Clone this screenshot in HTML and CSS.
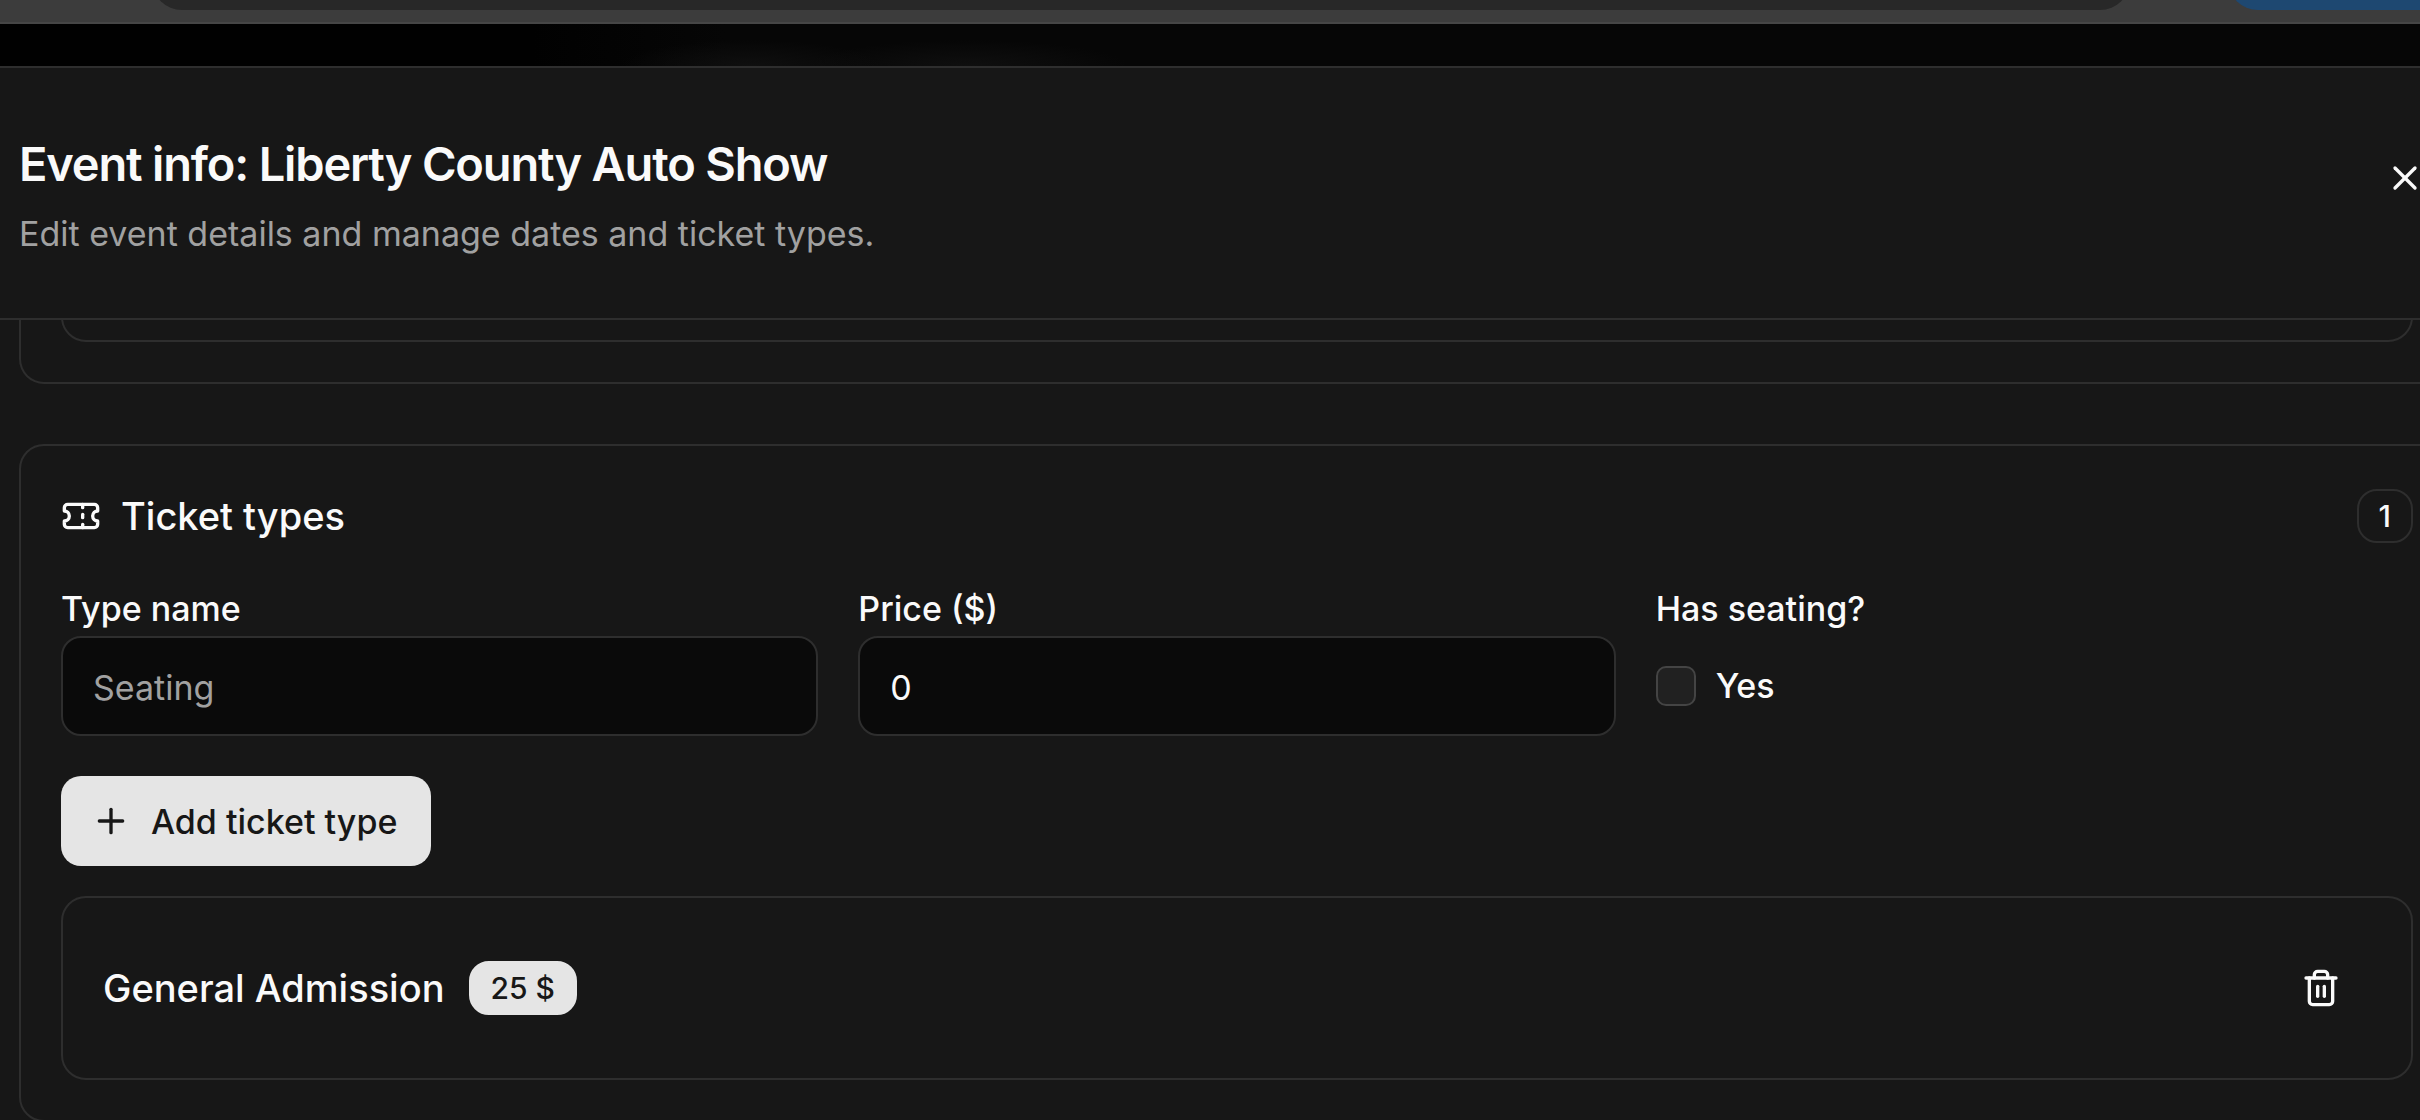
FILE: index.html
```html
<!DOCTYPE html>
<html lang="en">
<head>
<meta charset="utf-8">
<meta name="viewport" content="width=device-width, initial-scale=1">
<title>Event info: Liberty County Auto Show</title>
<link rel="stylesheet" href="styles.css">
</head>
<body>
<div class="toolbar">
  <div class="toolbar-address"></div>
  <div class="toolbar-action"></div>
</div>
<div class="backdrop"></div>
<main class="dialog">
  <header class="dialog-header">
    <div class="dialog-heading">
      <h1 class="dialog-title">Event info: Liberty County Auto Show</h1>
      <p class="dialog-description">Edit event details and manage dates and ticket types.</p>
    </div>
    <button class="icon-button" type="button" aria-label="Close">
      <svg class="icon" viewBox="0 0 24 24"><path d="M18 6 6 18"/><path d="m6 6 12 12"/></svg>
    </button>
  </header>
  <div class="dialog-body">
    <section class="card card-scrolled">
      <div class="scrolled-item"></div>
    </section>
    <section class="card">
      <div class="card-header">
        <h2 class="card-title">
          <svg class="icon" viewBox="0 0 24 24"><path d="M2 9a3 3 0 0 1 0 6v2a2 2 0 0 0 2 2h16a2 2 0 0 0 2-2v-2a3 3 0 0 1 0-6V7a2 2 0 0 0-2-2H4a2 2 0 0 0-2 2Z"/><path d="M13 5v2"/><path d="M13 17v2"/><path d="M13 11v2"/></svg>
          <span>Ticket types</span>
        </h2>
        <span class="badge badge-outline">1</span>
      </div>
      <form class="ticket-form">
        <div class="fields">
          <div class="field">
            <label class="label" for="type-name">Type name</label>
            <input class="input" id="type-name" type="text" placeholder="Seating">
          </div>
          <div class="field">
            <label class="label" for="price">Price ($)</label>
            <input class="input" id="price" type="number" value="0">
          </div>
          <div class="field" role="group" aria-labelledby="seating-label">
            <span class="label" id="seating-label">Has seating?</span>
            <div class="check-row">
              <input class="checkbox" id="seating" type="checkbox">
              <label class="label" for="seating">Yes</label>
            </div>
          </div>
        </div>
        <button class="button" type="button">
          <svg class="icon" viewBox="0 0 24 24"><path d="M5 12h14"/><path d="M12 5v14"/></svg>
          <span>Add ticket type</span>
        </button>
      </form>
      <div class="ticket">
        <div class="ticket-info">
          <span class="ticket-name">General Admission</span>
          <span class="badge badge-solid">25 $</span>
        </div>
        <button class="icon-button" type="button" aria-label="Delete ticket type">
          <svg class="icon" viewBox="0 0 24 24"><path d="M3 6h18"/><path d="M19 6v14a2 2 0 0 1-2 2H7a2 2 0 0 1-2-2V6"/><path d="M8 6V4a2 2 0 0 1 2-2h4a2 2 0 0 1 2 2v2"/><path d="M10 11v6"/><path d="M14 11v6"/></svg>
        </button>
      </div>
    </section>
  </div>
</main>
</body>
</html>
```
FILE: styles.css
```css
* {
  box-sizing: border-box;
}

:root {
  --surface: #171717;
  --border: #2e2e2e;
  --text: #fafafa;
  --muted: #a1a1a1;
  --solid: #e5e5e5;
}

body {
  margin: 0;
  height: 100vh;
  overflow: hidden;
  display: flex;
  flex-direction: column;
  background: var(--surface);
  color: var(--text);
  font-family: Inter, "Liberation Sans", sans-serif;
  font-size: 34px;
}

h1,
h2,
p {
  margin: 0;
}

button,
input {
  font: inherit;
}

/* Lower edge of the window toolbar */
.toolbar {
  flex: none;
  display: flex;
  gap: 98px;
  height: 24px;
  padding-left: 152px;
  overflow: hidden;
  background: #3c3c3c;
  border-bottom: 2px solid #464646;
}

.toolbar-address,
.toolbar-action {
  height: 60px;
  margin-top: -50px;
  border-radius: 30px;
  background: #282828;
}

.toolbar-address {
  flex: 1;
}

.toolbar-action {
  flex: none;
  width: 240px;
  margin-right: -48px;
  background: #1e4871;
}

.backdrop {
  flex: none;
  height: 42px;
  background:
    radial-gradient(ellipse 130px 26px at 31% 100%, #0f0f0f, transparent),
    radial-gradient(ellipse 160px 26px at 40% 100%, #0f0f0f, transparent),
    linear-gradient(90deg, #010101 22%, #060606 30%);
}

.dialog {
  flex: none;
  border-top: 2px solid var(--border);
}

.dialog-header {
  display: flex;
  justify-content: space-between;
  align-items: center;
  height: 252px;
  padding-left: 19px;
  margin-right: -35px;
  border-bottom: 2px solid var(--border);
}

.dialog-header .icon-button {
  align-self: flex-start;
  margin-top: 60px;
}

.dialog-heading {
  display: flex;
  flex-direction: column;
  gap: 10px;
  padding-top: 2px;
}

.dialog-title {
  font-size: 47px;
  line-height: 70px;
  font-weight: 600;
  letter-spacing: -0.025em;
}

.dialog-description {
  line-height: 50px;
  color: var(--muted);
}

.dialog-body {
  display: flex;
  flex-direction: column;
  gap: 60px;
  padding-left: 19px;
  margin-right: -35px;
  overflow: hidden;
}

.card {
  padding: 40px;
  border: 2px solid var(--border);
  border-radius: 25px;
}

.card-scrolled {
  padding-top: 0;
  margin-top: -40px;
  border-top: 0;
}

.scrolled-item {
  height: 62px;
  border: 2px solid var(--border);
  border-radius: 25px;
}

.card-header {
  display: flex;
  justify-content: space-between;
  align-items: center;
  height: 60px;
  margin-bottom: 40px;
}

.card-title {
  display: flex;
  align-items: center;
  gap: 20px;
  font-size: 38px;
  font-weight: 500;
}

.icon {
  flex: none;
  display: block;
  width: 40px;
  height: 40px;
  fill: none;
  stroke: currentColor;
  stroke-width: 2;
  stroke-linecap: round;
  stroke-linejoin: round;
}

.icon-button {
  display: grid;
  place-items: center;
  width: 100px;
  height: 100px;
  padding: 0;
  border: 0;
  background: none;
  color: inherit;
}

.badge {
  display: inline-block;
  padding: 5px 20px;
  border: 2px solid var(--border);
  border-radius: 20px;
  font-size: 30px;
  line-height: 40px;
  font-weight: 500;
}

.badge-solid {
  border-color: var(--solid);
  background: var(--solid);
  color: var(--surface);
}

.ticket-form {
  display: flex;
  flex-direction: column;
  align-items: flex-start;
  gap: 40px;
  margin-bottom: 30px;
}

.fields {
  display: grid;
  grid-template-columns: repeat(3, 1fr);
  gap: 40px;
  width: 100%;
}

.field {
  display: flex;
  flex-direction: column;
  gap: 4px;
  min-width: 0;
}

.label {
  line-height: 46px;
  font-weight: 500;
}

.input {
  width: 100%;
  height: 100px;
  padding: 2px 30px 0;
  border: 2px solid var(--border);
  border-radius: 20px;
  background: #0a0a0a;
  color: var(--text);
  appearance: textfield;
}

.input::placeholder {
  color: var(--muted);
  opacity: 1;
}

.input::-webkit-inner-spin-button {
  appearance: none;
  margin: 0;
}

.check-row {
  display: flex;
  align-items: center;
  gap: 20px;
  height: 100px;
}

.checkbox {
  appearance: none;
  width: 40px;
  height: 40px;
  margin: 0;
  border: 2px solid #444;
  border-radius: 10px;
  background: #212121;
}

.button {
  display: flex;
  align-items: center;
  gap: 20px;
  height: 90px;
  padding: 0 34px 0 30px;
  border: 0;
  border-radius: 20px;
  background: var(--solid);
  color: var(--surface);
  font-weight: 500;
}

.ticket {
  display: flex;
  justify-content: space-between;
  align-items: center;
  padding: 40px;
  border: 2px solid var(--border);
  border-radius: 25px;
}

.ticket-info {
  display: flex;
  align-items: center;
  gap: 24px;
}

.ticket-name {
  font-size: 38px;
  font-weight: 500;
}
```
